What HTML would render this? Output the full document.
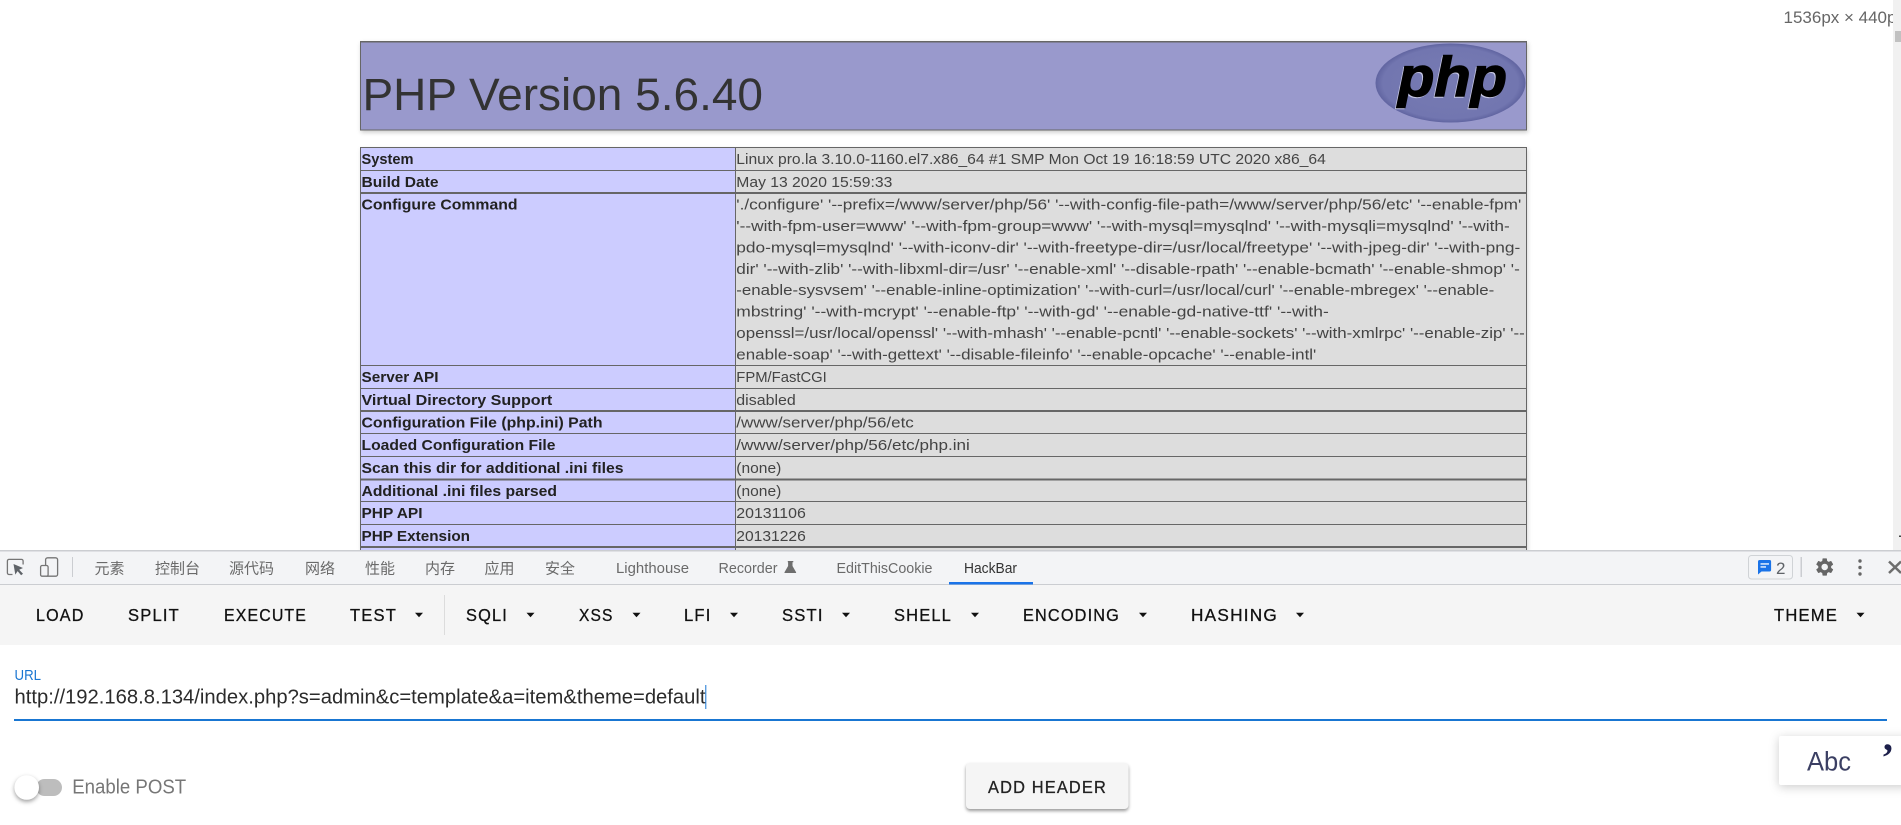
<!DOCTYPE html>
<html lang="zh">
<head>
<meta charset="utf-8">
<title>PHP Version 5.6.40 - HackBar</title>
<style>
html,body{margin:0;padding:0;width:1901px;height:825px;overflow:hidden;background:#fff}
svg{display:block;position:absolute;left:0;top:0}
text{font-family:"Liberation Sans","Noto Sans CJK SC",sans-serif;white-space:pre}
.l{font-size:15px;font-weight:bold;fill:#222}
.v{font-size:15px;fill:#444}
.tab{font-size:15px;fill:#6a6a6a}
.cn{font-family:"Noto Sans CJK SC","Liberation Sans",sans-serif}
.b{font-size:17.5px;fill:#111;stroke:#111;stroke-width:.3px;letter-spacing:1.25px}
</style>
</head>
<body>
<svg width="1901" height="825" viewBox="0 0 1901 825" xmlns="http://www.w3.org/2000/svg">
<defs>
<radialGradient id="pg" cx="50%" cy="50%" r="55%">
<stop offset="0" stop-color="#777bb3"/><stop offset=".82" stop-color="#7276b0"/><stop offset="1" stop-color="#4f5391"/>
</radialGradient>
</defs>

<!-- size readout -->
<text x="1783.500" y="23" font-size="17" fill="#666">1536px × 440px</text>
<rect x="1893" y="0" width="8" height="550" fill="#f1f1f1"/>
<rect x="1895" y="31" width="6" height="11" fill="#c1c1c1"/>
<rect x="1899" y="535.5" width="2" height="1.5" fill="#444"/>

<!-- header -->
<rect x="360.5" y="41.5" width="1166" height="88.5" fill="#9999cc" stroke="#666" style="filter:drop-shadow(1px 2px 2px rgba(0,0,0,.2))"/>
<rect x="360" y="41" width="1167" height="1.5" fill="#666"/>
<text x="362.500" y="110" font-size="45" fill="#333" textLength="400.500" lengthAdjust="spacingAndGlyphs">PHP Version 5.6.40</text>
<ellipse cx="1450.5" cy="83" rx="75" ry="39.5" fill="url(#pg)"/>
<text x="1398" y="96" font-size="56" font-weight="bold" font-style="italic" fill="#000" stroke="#000" stroke-width="1.400" textLength="109" lengthAdjust="spacingAndGlyphs" style="filter:drop-shadow(-1px 1px 0 rgba(225,225,245,.75))">php</text>

<!-- table -->
<g style="filter:drop-shadow(1px 2px 2px rgba(0,0,0,.15))">
<rect x="360" y="147" width="1167" height="403" fill="#666"/>
</g>
<rect x="361" y="148" width="374" height="402" fill="#ccccff"/>
<rect x="736" y="148" width="790" height="402" fill="#dddddd"/>
<g fill="#666">
<rect x="360" y="170" width="1167" height="1"/>
<rect x="360" y="192" width="1167" height="2"/>
<rect x="360" y="365" width="1167" height="1"/>
<rect x="360" y="388" width="1167" height="1"/>
<rect x="360" y="410" width="1167" height="2"/>
<rect x="360" y="433" width="1167" height="1"/>
<rect x="360" y="456" width="1167" height="1"/>
<rect x="360" y="478.5" width="1167" height="2"/>
<rect x="360" y="501" width="1167" height="1"/>
<rect x="360" y="524" width="1167" height="1"/>
<rect x="360" y="546" width="1167" height="2"/>
</g>

<text class="l" x="361.500" y="164" textLength="52" lengthAdjust="spacingAndGlyphs">System</text>
<text class="l" x="361.500" y="187" textLength="77" lengthAdjust="spacingAndGlyphs">Build Date</text>
<text class="l" x="361.500" y="209.5" textLength="156" lengthAdjust="spacingAndGlyphs">Configure Command</text>
<text class="l" x="361.500" y="382" textLength="77" lengthAdjust="spacingAndGlyphs">Server API</text>
<text class="l" x="361.500" y="405" textLength="190.700" lengthAdjust="spacingAndGlyphs">Virtual Directory Support</text>
<text class="l" x="361.500" y="427.500" textLength="241" lengthAdjust="spacingAndGlyphs">Configuration File (php.ini) Path</text>
<text class="l" x="361.500" y="450" textLength="194" lengthAdjust="spacingAndGlyphs">Loaded Configuration File</text>
<text class="l" x="361.500" y="473" textLength="262" lengthAdjust="spacingAndGlyphs">Scan this dir for additional .ini files</text>
<text class="l" x="361.500" y="496" textLength="195.500" lengthAdjust="spacingAndGlyphs">Additional .ini files parsed</text>
<text class="l" x="361.500" y="518" textLength="61" lengthAdjust="spacingAndGlyphs">PHP API</text>
<text class="l" x="361.500" y="541" textLength="108.500" lengthAdjust="spacingAndGlyphs">PHP Extension</text>

<text class="v" x="736.300" y="164" textLength="589.500" lengthAdjust="spacingAndGlyphs">Linux pro.la 3.10.0-1160.el7.x86_64 #1 SMP Mon Oct 19 16:18:59 UTC 2020 x86_64</text>
<text class="v" x="736.300" y="187" textLength="156" lengthAdjust="spacingAndGlyphs">May 13 2020 15:59:33</text>
<text class="v" x="736.300" y="209.500" textLength="785" lengthAdjust="spacingAndGlyphs">'./configure' '--prefix=/www/server/php/56' '--with-config-file-path=/www/server/php/56/etc' '--enable-fpm'</text>
<text class="v" x="736.300" y="230.900" textLength="773.500" lengthAdjust="spacingAndGlyphs">'--with-fpm-user=www' '--with-fpm-group=www' '--with-mysql=mysqlnd' '--with-mysqli=mysqlnd' '--with-</text>
<text class="v" x="736.300" y="252.400" textLength="784" lengthAdjust="spacingAndGlyphs">pdo-mysql=mysqlnd' '--with-iconv-dir' '--with-freetype-dir=/usr/local/freetype' '--with-jpeg-dir' '--with-png-</text>
<text class="v" x="736.300" y="273.800" textLength="783.500" lengthAdjust="spacingAndGlyphs">dir' '--with-zlib' '--with-libxml-dir=/usr' '--enable-xml' '--disable-rpath' '--enable-bcmath' '--enable-shmop' '-</text>
<text class="v" x="736.300" y="295.200" textLength="758" lengthAdjust="spacingAndGlyphs">-enable-sysvsem' '--enable-inline-optimization' '--with-curl=/usr/local/curl' '--enable-mbregex' '--enable-</text>
<text class="v" x="736.300" y="316.600" textLength="592.500" lengthAdjust="spacingAndGlyphs">mbstring' '--with-mcrypt' '--enable-ftp' '--with-gd' '--enable-gd-native-ttf' '--with-</text>
<text class="v" x="736.300" y="338" textLength="788.500" lengthAdjust="spacingAndGlyphs">openssl=/usr/local/openssl' '--with-mhash' '--enable-pcntl' '--enable-sockets' '--with-xmlrpc' '--enable-zip' '--</text>
<text class="v" x="736.300" y="359.500" textLength="580" lengthAdjust="spacingAndGlyphs">enable-soap' '--with-gettext' '--disable-fileinfo' '--enable-opcache' '--enable-intl'</text>
<text class="v" x="736.300" y="382" textLength="90.500" lengthAdjust="spacingAndGlyphs">FPM/FastCGI</text>
<text class="v" x="736.300" y="405" textLength="59.500" lengthAdjust="spacingAndGlyphs">disabled</text>
<text class="v" x="736.300" y="427.500" textLength="177.500" lengthAdjust="spacingAndGlyphs">/www/server/php/56/etc</text>
<text class="v" x="736.300" y="450" textLength="233.500" lengthAdjust="spacingAndGlyphs">/www/server/php/56/etc/php.ini</text>
<text class="v" x="736.300" y="473" textLength="45" lengthAdjust="spacingAndGlyphs">(none)</text>
<text class="v" x="736.300" y="496" textLength="45" lengthAdjust="spacingAndGlyphs">(none)</text>
<text class="v" x="736.300" y="518" textLength="69.500" lengthAdjust="spacingAndGlyphs">20131106</text>
<text class="v" x="736.300" y="541" textLength="69.500" lengthAdjust="spacingAndGlyphs">20131226</text>

<!-- devtools tab bar -->
<rect x="0" y="550" width="1901" height="35" fill="#f3f4f6"/>
<rect x="0" y="550" width="1901" height="1.500" fill="#cbcdd1"/>
<rect x="0" y="584" width="1901" height="1" fill="#cbcdd1"/>

<path d="M12.500 574.500H9a1.600 1.600 0 0 1-1.600-1.600V561a1.600 1.600 0 0 1 1.600-1.600h12.500a1.600 1.600 0 0 1 1.600 1.600v3.500" fill="none" stroke="#757575" stroke-width="1.300"/>
<path d="M13.500 564l9.500 4-3.800 1.700 3.800 4-1.900 1.600-3.500-4.200-2.300 3.500z" fill="#5f6368"/>
<rect x="45.600" y="557.800" width="12" height="18.400" rx="2" fill="none" stroke="#757575" stroke-width="1.300"/>
<rect x="40.600" y="565.500" width="7.500" height="10.700" rx="1.500" fill="#f3f4f6" stroke="#757575" stroke-width="1.300"/>
<rect x="72" y="557" width="1" height="20" fill="#cbcdd1"/>

<g class="tab">
<text class="tab cn" x="94.500" y="573.500">元素</text>
<text class="tab cn" x="155" y="573.500">控制台</text>
<text class="tab cn" x="229" y="573.500">源代码</text>
<text class="tab cn" x="305" y="573.500">网络</text>
<text class="tab cn" x="365" y="573.500">性能</text>
<text class="tab cn" x="425" y="573.500">内存</text>
<text class="tab cn" x="484.500" y="573.500">应用</text>
<text class="tab cn" x="545" y="573.500">安全</text>
<text class="tab" x="616" y="573" textLength="73" lengthAdjust="spacingAndGlyphs">Lighthouse</text>
<text class="tab" x="718.500" y="573" textLength="59" lengthAdjust="spacingAndGlyphs">Recorder</text>
<text class="tab" x="836.500" y="573" textLength="96" lengthAdjust="spacingAndGlyphs">EditThisCookie</text>
<text class="tab" x="964" y="573" textLength="53" lengthAdjust="spacingAndGlyphs" style="fill:#333">HackBar</text>
</g>
<path d="M787.800 561h5.500v1.200h-.8v3.800l3.600 6.200c.2.400 0 .8-.5.800h-10.600c-.5 0-.7-.4-.5-.8l3.600-6.200v-3.800h-.3z" fill="#6e6e6e"/>
<rect x="949" y="582" width="84" height="2.500" fill="#1a73e8"/>

<rect x="1748.500" y="555.500" width="44" height="23.500" rx="3" fill="none" stroke="#d0d3d6"/>
<path d="M1760 560h9.500a1.600 1.600 0 0 1 1.600 1.600v8.300a1.600 1.600 0 0 1-1.600 1.600h-8l-3.500 3v-12.900a1.600 1.600 0 0 1 2-1.600z" fill="#1a73e8"/>
<rect x="1760.500" y="563.300" width="8.500" height="1.300" fill="#fff"/>
<rect x="1760.500" y="566.300" width="5.500" height="1.300" fill="#fff"/>
<text x="1776" y="574" font-size="17" fill="#5f6368">2</text>
<rect x="1800.500" y="557" width="1.500" height="20" fill="#cbcdd1"/>
<path transform="translate(1813.900 556.200) scale(.9)" fill="#666" d="M19.140 12.940c.04-.3.06-.61.06-.94 0-.32-.02-.64-.07-.94l2.030-1.580c.18-.14.23-.41.12-.61l-1.920-3.320c-.12-.22-.37-.29-.59-.22l-2.390.96c-.5-.38-1.030-.7-1.620-.94l-.36-2.540c-.04-.24-.24-.41-.48-.41h-3.840c-.24 0-.43.17-.47.41l-.36 2.540c-.59.24-1.130.57-1.620.94l-2.390-.96c-.22-.08-.47 0-.59.22L2.740 8.870c-.12.21-.08.47.12.61l2.030 1.580c-.05.3-.09.63-.09.94s.02.64.07.94l-2.030 1.580c-.18.14-.23.41-.12.61l1.920 3.320c.12.22.37.29.59.22l2.390-.96c.5.38 1.030.7 1.620.94l.36 2.540c.05.24.24.41.48.41h3.840c.24 0 .44-.17.47-.41l.36-2.540c.59-.24 1.130-.56 1.620-.94l2.390.96c.22.08.47 0 .59-.22l1.920-3.320c.12-.22.07-.47-.12-.61l-2.010-1.580zM12 15.600c-1.980 0-3.600-1.620-3.600-3.600s1.620-3.600 3.600-3.600 3.600 1.620 3.600 3.600-1.620 3.600-3.600 3.600z"/>
<g fill="#666"><circle cx="1860" cy="561" r="1.700"/><circle cx="1860" cy="567.500" r="1.700"/><circle cx="1860" cy="574" r="1.700"/></g>
<path d="M1889 561.500l12 11.500M1901 561.500l-12 11.500" stroke="#6e6e6e" stroke-width="2.500" fill="none"/>

<!-- hackbar toolbar -->
<rect x="0" y="585" width="1901" height="60" fill="#f5f5f5"/>
<rect x="444" y="595" width="1" height="40" fill="#dcdcdc"/>
<text class="b" x="36" y="621" textLength="48.500" lengthAdjust="spacingAndGlyphs">LOAD</text>
<text class="b" x="128" y="621" textLength="52" lengthAdjust="spacingAndGlyphs">SPLIT</text>
<text class="b" x="224" y="621" textLength="83" lengthAdjust="spacingAndGlyphs">EXECUTE</text>
<text class="b" x="350" y="621" textLength="47" lengthAdjust="spacingAndGlyphs">TEST</text>
<text class="b" x="466" y="621" textLength="42" lengthAdjust="spacingAndGlyphs">SQLI</text>
<text class="b" x="579" y="621" textLength="34.500" lengthAdjust="spacingAndGlyphs">XSS</text>
<text class="b" x="684" y="621" textLength="27.500" lengthAdjust="spacingAndGlyphs">LFI</text>
<text class="b" x="782" y="621" textLength="41.700" lengthAdjust="spacingAndGlyphs">SSTI</text>
<text class="b" x="894" y="621" textLength="58" lengthAdjust="spacingAndGlyphs">SHELL</text>
<text class="b" x="1023" y="621" textLength="97" lengthAdjust="spacingAndGlyphs">ENCODING</text>
<text class="b" x="1191" y="621" textLength="87" lengthAdjust="spacingAndGlyphs">HASHING</text>
<text class="b" x="1774" y="621" textLength="64" lengthAdjust="spacingAndGlyphs">THEME</text>
<g fill="#111">
<path d="M415 612.800h8l-4 4.500z"/><path d="M526.500 612.800h8l-4 4.500z"/><path d="M632.500 612.800h8l-4 4.500z"/>
<path d="M730 612.800h8l-4 4.500z"/><path d="M842 612.800h8l-4 4.500z"/><path d="M971 612.800h8l-4 4.500z"/>
<path d="M1139 612.800h8l-4 4.500z"/><path d="M1296 612.800h8l-4 4.500z"/><path d="M1856.500 612.800h8l-4 4.500z"/>
</g>

<!-- URL -->
<text x="14.500" y="680" font-size="15" fill="#1976d2" textLength="26.500" lengthAdjust="spacingAndGlyphs">URL</text>
<text x="14.500" y="703.300" font-size="20.500" fill="#2b2b2b" textLength="691" lengthAdjust="spacingAndGlyphs">http://192.168.8.134/index.php?s=admin&amp;c=template&amp;a=item&amp;theme=default</text>
<rect x="705.300" y="685" width="1" height="24" fill="#1976d2"/>
<rect x="14" y="719" width="1873" height="2" fill="#1976d2"/>

<!-- Enable POST -->
<rect x="36" y="779" width="26" height="17" rx="8.500" fill="#bdbdbd"/>
<circle cx="26.700" cy="787.500" r="12.300" fill="#fff" style="filter:drop-shadow(0 2px 2px rgba(0,0,0,.38))"/>
<text x="72.200" y="793.300" font-size="20.500" fill="#767676" textLength="114" lengthAdjust="spacingAndGlyphs">Enable POST</text>

<!-- Add header -->
<rect x="966" y="763" width="162.500" height="46" rx="4" fill="#f5f5f5" style="filter:drop-shadow(0 2px 1.500px rgba(0,0,0,.4))"/>
<text class="b" x="988" y="793" textLength="119" lengthAdjust="spacingAndGlyphs" style="fill:#222;stroke:#222">ADD HEADER</text>

<!-- Abc popup -->
<rect x="1779" y="736" width="130" height="49" rx="2" fill="#fff" style="filter:drop-shadow(0 2px 5px rgba(0,0,0,.2))"/>
<text x="1807" y="770.500" font-size="27" fill="#3b3f63" textLength="44" lengthAdjust="spacingAndGlyphs">Abc</text>
<text x="1881" y="771" font-size="40" font-weight="bold" fill="#1c1f4a" style="font-family:'Liberation Serif',serif">’</text>
</svg>
</body>
</html>
